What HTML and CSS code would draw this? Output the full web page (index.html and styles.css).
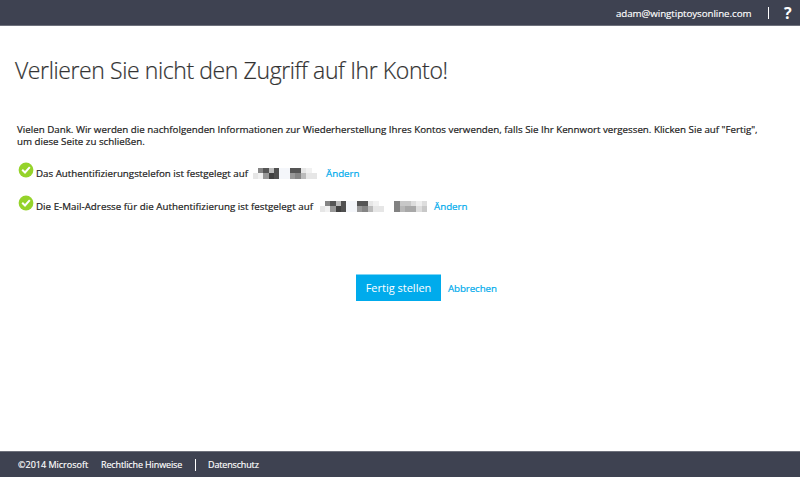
FILE: index.html
```html
<!DOCTYPE html>
<html lang="de">
<head>
<meta charset="utf-8">
<title>Kontosicherheit</title>
<link rel="stylesheet" href="styles.css">
</head>
<body>
<header class="topbar">
  <span class="user">adam@wingtiptoysonline.com</span>
  <span class="divider"></span>
  <span class="help">?</span>
</header>
<main class="content">
  <h1 class="title">Verlieren Sie nicht den Zugriff auf Ihr Konto!</h1>
  <p class="intro">Vielen Dank. Wir werden die nachfolgenden Informationen zur Wiederherstellung Ihres Kontos verwenden, falls Sie Ihr Kennwort vergessen. Klicken Sie auf "Fertig", um diese Seite zu schließen.</p>
  <div class="row">
    <svg class="check" width="16" height="16" viewBox="0 0 16 16"><circle cx="8" cy="8" r="7.4" fill="#95d32a"/><path d="M4.2 7.7 7 10.5 11.8 5.2" fill="none" stroke="#fff" stroke-width="2"/></svg>
    <span class="label phone">Das Authentifizierungstelefon ist festgelegt auf</span>
    <svg class="mask" width="65" height="11" viewBox="0 0 65 11">
      <g id="blocks">
        <path fill="#e6e6e6" d="M0 5h5v6H0zM48 0h5v5h-5zM53 5h6v6h-6zM59 5h5v6h-5z"/>
        <path fill="#f1f1f1" d="M5 5h5v6H5zM53 0h6v5h-6z"/>
        <path fill="#f4f6fa" d="M26 0h11v11H26z"/>
        <path fill="#858585" d="M5 0h5v5H5zM42 5h6v6h-6z"/>
        <path fill="#555" d="M10 0h6v5h-6zM37 0h11v5H37z"/>
        <path fill="#989898" d="M10 5h6v6h-6zM37 5h5v6h-5z"/>
        <path fill="#bbb" d="M16 0h5v5h-5zM48 5h5v6h-5z"/>
        <path fill="#404040" d="M16 5h5v6h-5z"/>
        <path fill="#4f4f4f" d="M21 0h5v11h-5z"/>
      </g>
    </svg>
    <a class="link">Ändern</a>
  </div>
  <div class="row">
    <svg class="check" width="16" height="16" viewBox="0 0 16 16"><circle cx="8" cy="8" r="7.4" fill="#95d32a"/><path d="M4.2 7.7 7 10.5 11.8 5.2" fill="none" stroke="#fff" stroke-width="2"/></svg>
    <span class="label mail">Die E-Mail-Adresse für die Authentifizierung ist festgelegt auf</span>
    <svg class="mask" width="107" height="11" viewBox="0 0 107 11">
      <use href="#blocks"/>
      <path fill="#828282" d="M74 0h6v11h-6z"/>
      <path fill="#c8c8c8" d="M80 0h11v5H80zM102 5h5v6h-5z"/>
      <path fill="#b8b8b8" d="M80 5h5v6h-5z"/>
      <path fill="#a8a8a8" d="M85 5h11v6H85z"/>
      <path fill="#ddd" d="M91 0h5v5h-5zM96 5h6v6h-6zM102 0h5v5h-5z"/>
      <path fill="#eee" d="M96 0h6v5h-6z"/>
    </svg>
    <a class="link">Ändern</a>
  </div>
  <div class="actions">
    <button class="primary">Fertig stellen</button>
    <a class="link cancel">Abbrechen</a>
  </div>
</main>
<footer class="footer">
  <span class="copy">©2014 Microsoft</span>
  <span class="legal">Rechtliche Hinweise</span>
  <span class="divider"></span>
  <span class="privacy">Datenschutz</span>
</footer>
</body>
</html>
```
FILE: styles.css
```css
* { box-sizing: border-box; }
body { margin: 0; height: 477px; display: flex; flex-direction: column; background: #fff; color: #222; font: 500 9.75px/12px "Open Sans", "Noto Sans", sans-serif; white-space: nowrap; overflow: hidden; }
.topbar { height: 26px; background: #3e4251; border-bottom: 1px solid #6e717c; color: #fff; display: flex; align-items: center; padding-left: 616px; }
.user { width: 152px; padding-top: 2px; letter-spacing: -0.06px; -webkit-text-stroke: 0.15px; }
.divider { width: 1px; height: 12px; background: #fff; }
.help { font-size: 16px; font-weight: 700; margin-left: 15px; }
.content { flex: 1; padding: 0 16px; }
.title { margin: 28px 0 0 -1px; font-size: 23px; line-height: 32px; font-weight: 300; color: #333; letter-spacing: -0.4px; -webkit-text-stroke: 0.2px; }
.intro { width: 750px; margin: 38px 0 0 1px; white-space: normal; -webkit-text-stroke: 0.2px; }
.row { display: flex; height: 33px; padding-left: 2px; -webkit-text-stroke: 0.2px; }
.intro + .row { margin-top: 13px; }
.check { margin-top: 1px; }
.label { margin: 7px 0 0 2px; width: 217px; }
.mail { width: 284px; letter-spacing: 0.03px; }
.mask { margin-top: 7px; }
.link { color: #00abec; margin: 7px 0 0 8px; }
.mail ~ .link { margin-left: 7px; }
.actions { display: flex; margin: 47px 0 0 340px; }
.primary { width: 85px; height: 27px; border: 0; border-top: 1px solid #7fd5f5; padding: 0; background: #00abec; color: #fff; font: 400 11px/26px "Open Sans", sans-serif; }
.cancel { margin: 9px 0 0 7px; letter-spacing: -0.1px; -webkit-text-stroke: 0.2px; }
.footer { height: 26px; background: #3e4251; border-top: 1px solid #6e717c; color: #fff; display: flex; align-items: center; padding-left: 18px; font-size: 9px; -webkit-text-stroke: 0.15px; }
.copy { width: 83px; }
.legal { width: 94px; letter-spacing: -0.12px; }
.privacy { margin-left: 12px; letter-spacing: -0.15px; }
```
